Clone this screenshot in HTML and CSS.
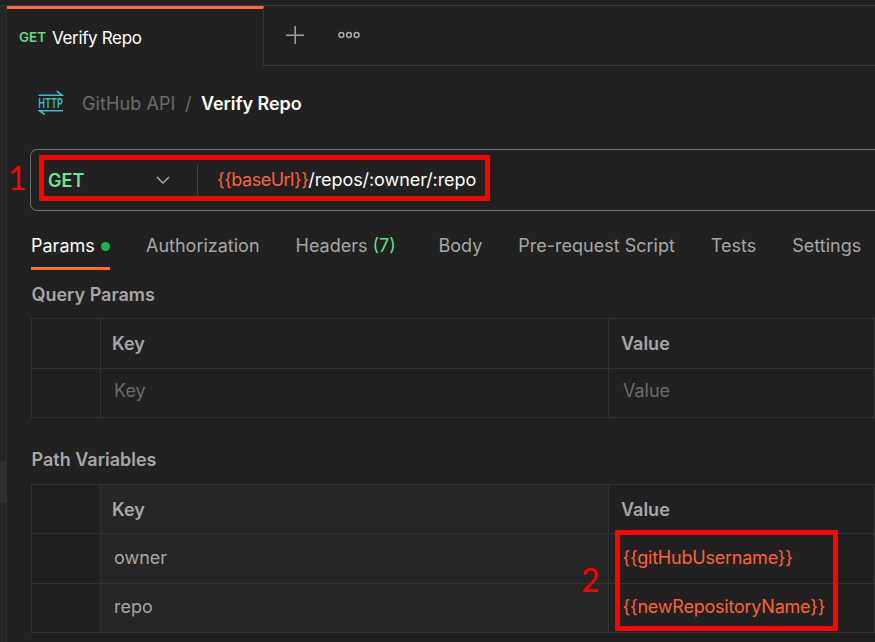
FILE: index.html
```html
<!DOCTYPE html>
<html lang="en">
<head>
<meta charset="utf-8">
<title>Verify Repo</title>
<link rel="stylesheet" href="styles.css">
</head>
<body>
<div class="app">
  <aside class="rail"><div class="rail-handle"></div></aside>
  <main class="main">
    <header class="tabbar">
      <div class="tab"><span class="tab-method">GET</span><span class="tab-name">Verify Repo</span></div>
      <div class="tab-actions">
        <svg class="plus" width="20" height="20" viewBox="0 0 20 20"><path d="M10.2 1v18M1 10.2h18"/></svg>
        <svg class="more" width="24" height="8" viewBox="0 0 24 8"><circle cx="4.4" cy="4" r="2.4"/><circle cx="12" cy="4" r="2.4"/><circle cx="19.6" cy="4" r="2.4"/></svg>
      </div>
    </header>
    <div class="crumbs">
      <svg class="http" width="26" height="26" viewBox="0 0 26 26"><path d="M0.5 5.2H24L18.8 1.2M25 20.7H1.5L6.7 24.5"/><text x="0.2" y="17.8" textLength="24.6" lengthAdjust="spacingAndGlyphs">HTTP</text></svg>
      <span class="collection">GitHub API</span><span class="slash">/</span><span class="request">Verify Repo</span>
    </div>
    <div class="url-bar">
      <div class="method"><span>GET</span><svg width="16" height="10" viewBox="0 0 16 10"><path d="M2 2L8 8L14 2"/></svg></div>
      <div class="url"><span class="var">{{baseUrl}}</span>/repos/:owner/:repo</div>
      <div class="mark-box mark-url"></div>
      <span class="mark-num num-one">1</span>
    </div>
    <nav class="sections">
      <span class="section active">Params<i class="dot"></i></span>
      <span class="section auth">Authorization</span>
      <span class="section headers">Headers <b>(7)</b></span>
      <span class="section body">Body</span>
      <span class="section script">Pre-request Script</span>
      <span class="section tests">Tests</span>
      <span class="section">Settings</span>
    </nav>
    <h2 class="title">Query Params</h2>
    <div class="table query">
      <div class="cell"></div><div class="cell head key">Key</div><div class="cell head">Value</div>
      <div class="cell"></div><div class="cell hint">Key</div><div class="cell hint value">Value</div>
    </div>
    <h2 class="title path-title">Path Variables</h2>
    <div class="table path">
      <div class="cell"></div><div class="cell head key shade">Key</div><div class="cell head">Value</div>
      <div class="cell"></div><div class="cell shade">owner</div><div class="cell var">{{gitHubUsername}}</div>
      <div class="cell"></div><div class="cell shade last">repo</div><div class="cell var last">{{newRepositoryName}}</div>
      <div class="mark-box mark-values"></div>
      <span class="mark-num num-two">2</span>
    </div>
  </main>
</div>
</body>
</html>
```
FILE: styles.css
```css
* { box-sizing: border-box; }
body { margin: 0; background: #212121; color: #a6a6a6; font: 18px/24px Inter, "Liberation Sans", sans-serif; overflow: hidden; }
.app { display: flex; width: 875px; height: 642px; padding-top: 5px; overflow: hidden; }
.rail { width: 7px; flex: none; border-top: 1px solid #383838; border-right: 1px solid #303030; background: #262626; padding-top: 455px; }
.rail-handle { height: 42px; background: #303030; }
.main { flex: 1; min-width: 0; }
.tabbar { display: flex; height: 61px; border-top: 1px solid #3b3b3b; }
.tab { width: 257px; flex: none; border-top: 3px solid #ff6c37; border-right: 1px solid #363636; padding-left: 12px; display: flex; align-items: center; white-space: nowrap; }
.tab-method { width: 33px; color: #62dc88; font-size: 13.5px; font-weight: 600; padding-bottom: 1px; }
.tab-name { color: #fff; font-size: 17px; letter-spacing: -.35px; }
.tab-actions { flex: 1; display: flex; align-items: center; gap: 32px; padding: 0 0 2px 21px; border-bottom: 1px solid #363636; }
svg { fill: none; flex: none; }
.plus { stroke: #a3a3a3; stroke-width: 1.5; }
.more { stroke: #ababab; stroke-width: 1.5; }
.crumbs { display: flex; align-items: center; height: 83px; padding: 0 0 8px 31px; white-space: nowrap; }
.http { stroke: #38bdcb; stroke-width: 1.6; margin-bottom: 2px; overflow: visible; }
.http text { fill: #38bdcb; stroke: none; font: 600 13.5px Inter, sans-serif; }
.collection { width: 103px; margin-left: 18px; color: #6b6b6b; letter-spacing: .1px; }
.slash { width: 16px; color: #6b6b6b; }
.request { color: #fff; font-weight: 600; letter-spacing: -.05px; }
.url-bar { position: relative; display: flex; align-items: center; height: 62px; margin-left: 23px; border: 1px solid #6b6b6b; border-right: 0; border-radius: 7px 0 0 7px; }
.method { display: flex; align-items: center; justify-content: space-between; width: 167px; height: 33px; padding: 0 26px 0 17px; border-right: 1px solid #424242; color: #69e78e; font-weight: 600; }
.method span { padding-top: 2px; }
.method svg { stroke: #ababab; stroke-width: 1.5; }
.url { padding-left: 19px; color: #fff; letter-spacing: -.08px; white-space: nowrap; }
.var { color: #fb6235; }
.url .var { letter-spacing: -.5px; }
.mark-box { position: absolute; border: 5px solid #f00; }
.mark-url { left: 8px; top: 5px; width: 451px; height: 46px; }
.mark-num { position: absolute; color: #f00; font: 32px/36px Lato, sans-serif; }
.num-one { left: -23px; top: 10px; }
.num-two { left: 549px; top: 77px; }
.sections { display: flex; height: 60px; padding: 17px 0 0 24px; gap: 36px; white-space: nowrap; }
.section { height: 42px; padding-top: 6px; }
.active { color: #fff; width: 79px; border-bottom: 3px solid #ff6c37; display: flex; justify-content: space-between; }
.dot { width: 9px; height: 9px; border-radius: 50%; background: #0cbb52; margin-top: 8px; }
.headers { width: 107px; }
.headers b { color: #62dc88; font-weight: 400; }
.title { margin: 12px 0 0 24.5px; font-size: 18px; line-height: 24px; font-weight: 600; }
.table { position: relative; display: grid; grid-template-columns: 69px 508px 1fr; margin-left: 24px; border-left: 1px solid #333; border-top: 1px solid #333; }
.query { grid-template-rows: 50px 49px; margin-top: 11px; }
.path-title { margin-top: 30px; }
.path { grid-template-rows: 49px 50px 49px; margin-top: 12px; }
.cell { border-right: 1px solid #333; border-bottom: 1px solid #333; padding: 12px 0 0 13px; white-space: nowrap; }
.head { font-weight: 600; padding: 13px 0 0 12px; }
.key { padding-left: 11px; }
.hint { color: #6b6b6b; padding-top: 10px; }
.hint.value { padding-left: 14px; }
.shade { background: #262626; }
.last { padding-top: 11px; }
.cell.var { letter-spacing: -.22px; padding-left: 13.5px; }
.mark-values { left: 583px; top: 45px; width: 223px; height: 101px; }
```
